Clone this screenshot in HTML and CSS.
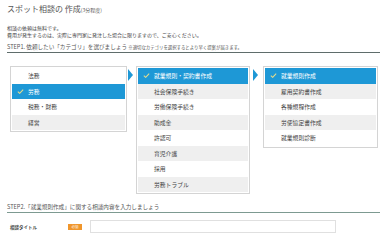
FILE: index.html
```html
<!DOCTYPE html>
<html lang="ja">
<head>
<meta charset="utf-8">
<link rel="stylesheet" href="styles.css">
</head>
<body>
<div class="page">
  <h1 class="title">スポット相談の 作成<span class="title-note">(3分程度)</span></h1>
  <p class="info">相談の依頼は無料です。<br>費用が発生するのは、実際に専門家に発注した場合に限りますので、ご安心ください。</p>

  <div class="step step1">STEP1. 依頼したい「カテゴリ」を選びましょう <span class="step-note">※適切なカテゴリを選択するとより早く提案が届きます。</span></div>

  <div class="picker">
    <ul class="col col1">
      <li class="item">法務</li>
      <li class="item sel"><svg class="chk" viewBox="0 0 8 6"><polyline points="0.8,3.2 3,5.2 7.2,0.8"/></svg>労務</li>
      <li class="item">税務・財務</li>
      <li class="item alt">経営</li>
    </ul>
    <div class="arrow a1"></div>
    <ul class="col col2">
      <li class="item sel"><svg class="chk" viewBox="0 0 8 6"><polyline points="0.8,3.2 3,5.2 7.2,0.8"/></svg>就業規則・契約書作成</li>
      <li class="item alt">社会保険手続き</li>
      <li class="item">労働保険手続き</li>
      <li class="item alt">助成金</li>
      <li class="item">許認可</li>
      <li class="item alt">育児介護</li>
      <li class="item">採用</li>
      <li class="item alt">労務トラブル</li>
    </ul>
    <div class="arrow a2"></div>
    <ul class="col col3">
      <li class="item sel"><svg class="chk" viewBox="0 0 8 6"><polyline points="0.8,3.2 3,5.2 7.2,0.8"/></svg>就業規則作成</li>
      <li class="item alt">雇用契約書作成</li>
      <li class="item">各種規程作成</li>
      <li class="item alt">労使協定書作成</li>
      <li class="item">就業規則診断</li>
    </ul>
  </div>

  <div class="step step2">STEP2.「就業規則作成」に関する相談内容を入力しましょう</div>

  <div class="form-row">
    <label class="label">相談タイトル</label>
    <span class="badge">必須</span>
    <input class="input" type="text">
  </div>
</div>
</body>
</html>
```

FILE: styles.css
```css
* { box-sizing: border-box; }
html, body { margin: 0; padding: 0; background: #fff; }
body {
  font-family: "Noto Sans CJK JP", "Noto Sans", sans-serif;
  color: #555;
  width: 384px;
  height: 240px;
  overflow: hidden;
}
.page { padding: 4px 4px 0 7px; }
.title {
  margin: 0;
  font-size: 8px;
  line-height: 10px;
  font-weight: normal;
  color: #555;
}
.title-note { font-size: 5px; }
.info {
  margin: 9px 0 0;
  font-size: 5px;
  line-height: 7px;
  color: #444;
}
.step {
  font-size: 5.6px;
  line-height: 8px;
  color: #555;
  padding-bottom: 1px;
}
.step1 {
  margin-top: 5px;
  border-bottom: 1px solid #5f6d6b;
}
.step-note { font-size: 4.4px; }
.picker {
  display: flex;
  align-items: flex-start;
  margin-top: 13px;
  padding-left: 3px;
}
.col {
  list-style: none;
  margin: 0;
  padding: 1px;
  border: 1px solid #d4d4d4;
  background: #fff;
}
.col1 { width: 117px; }
.col2 { width: 114px; }
.col3 { width: 115px; }
.item {
  height: 15.5px;
  display: flex;
  align-items: center;
  padding-left: 16px;
  font-size: 5.8px;
  color: #444;
  position: relative;
}
.item.alt { background: #efefef; }
.item.sel { background: #1e98d6; color: #fff; }
.chk {
  position: absolute;
  left: 5px;
  top: 5px;
  width: 7px;
  height: 5px;
  fill: none;
  stroke: #e4dc8c;
  stroke-width: 1.3;
}
.arrow {
  width: 0;
  height: 0;
  border-left: 5px solid #1e98d6;
  border-top: 6px solid transparent;
  border-bottom: 6px solid transparent;
  margin-top: 3px;
}
.a1 { margin-left: 1px; margin-right: 3px; }
.a2 { margin-left: 3px; margin-right: 5px; }
.step2 {
  margin-top: 9px;
  border-bottom: 1.5px solid #7d9a91;
}
.form-row {
  display: flex;
  align-items: center;
  margin-top: 7px;
  padding-left: 3px;
}
.label {
  font-size: 4.5px;
  font-weight: bold;
  color: #444;
  width: 58px;
}
.badge {
  background: #f0962c;
  color: #fff;
  font-size: 3.5px;
  width: 14px;
  height: 6px;
  display: flex;
  align-items: center;
  justify-content: center;
}
.input {
  margin-left: 8px;
  width: 246px;
  height: 13px;
  border: 1px solid #e0e0e0;
  padding: 0;
  background: #fff;
}
```
